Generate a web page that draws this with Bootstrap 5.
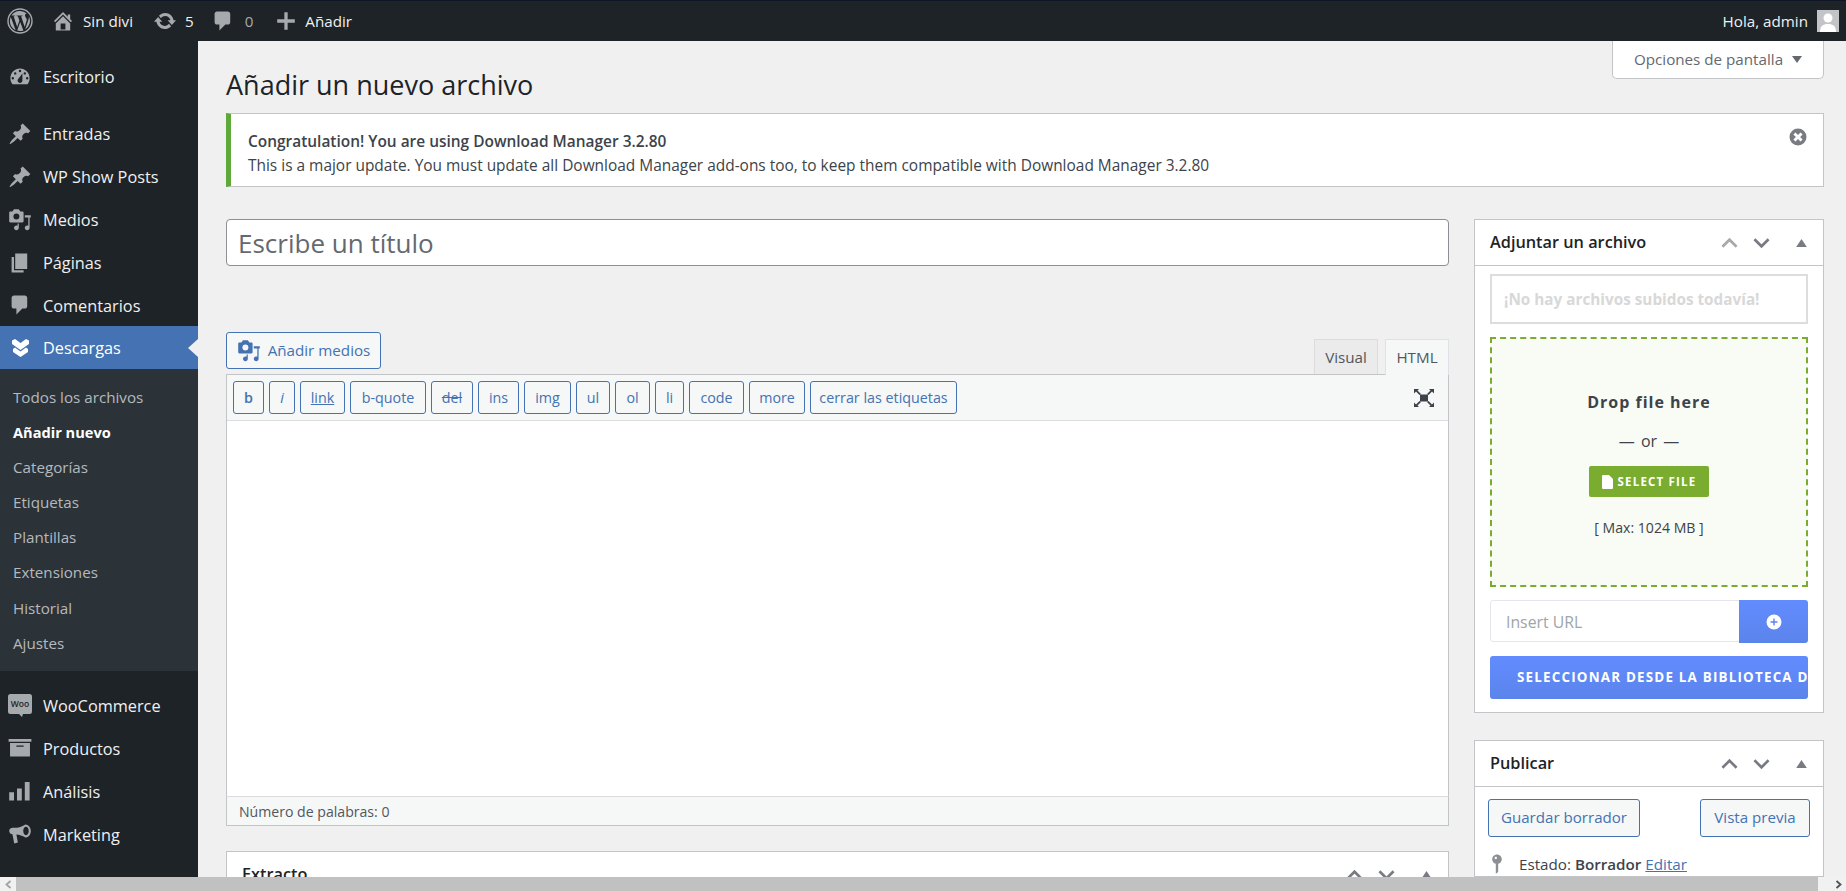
<!DOCTYPE html>
<html lang="es">
<head>
<meta charset="utf-8">
<title>Añadir un nuevo archivo</title>
<link rel="stylesheet" href="https://cdn.jsdelivr.net/npm/bootstrap@5.3.0/dist/css/bootstrap.min.css">
<style>
html,body{height:891px;overflow:hidden}
body{font-family:"Open Sans","Liberation Sans",sans-serif;font-size:14px;color:#3c434a;background:#f0f0f1;display:flex;flex-direction:column}
svg{display:block;flex:none}
.wp-topbar{height:41px;flex:none;background:#1d2327;border-top:1px solid #0e1525;color:#f0f0f1;font-size:15.2px;padding:0 7px 0 7px}
.wp-topbar svg{fill:#a7aaad}
.bar-num{color:#a7aaad}
.wp-mid{flex:1 1 auto;min-height:0;overflow:hidden}
.wp-side{width:198px;flex:none;background:#1d2327;padding-top:14px}
.wp-main{flex:1 1 auto;min-width:0;padding:0 22px 0 28px;overflow:hidden;background:#f0f0f1}
.side-link{height:43px;color:#f0f0f1;font-size:16.3px;padding-left:8px;gap:11px;text-decoration:none}
.side-link span{padding-top:2px}
.side-link svg{fill:#a7aaad;width:24px;height:24px}
.side-link.short{height:42px}
.side-gap{height:14px}
.side-gap2{height:13px}
.side-link.now{background:#4472b2;color:#fff;position:relative}
.side-link.now svg{fill:#fff}
.side-link.now::after{content:"";position:absolute;right:0;top:13px;border:9px solid transparent;border-left:0;border-right:10px solid #f0f0f1}
.side-sub{background:#2c3338;padding:11px 0 10px}
.side-sub a{display:block;height:35.1px;line-height:35px;padding-left:13px;font-size:15.2px;color:#b4b9be;text-decoration:none}
.side-sub a.on{color:#fff;font-weight:700;font-size:14.6px}
.head-row{height:72px}
.page-ttl{font-size:27px;font-weight:400;color:#1d2327;margin:23px 0 0;line-height:42px}
.scr-tab{width:212px;height:38px;background:#fff;border:1px solid #c3c4c7;border-top:0;border-radius:0 0 5px 5px;color:#646970;font-size:15.2px;gap:9px}
.scr-tab i{width:0;height:0;border:5px solid transparent;border-top:7px solid #646970;border-bottom:0}
.wp-notice{height:74px;background:#fff;border:1px solid #c3c4c7;border-left:5px solid #5fa83a;padding:15px 15px 0 17px;margin-bottom:32px;font-size:15.45px;line-height:24px;color:#3c434a}
.wp-notice b{font-weight:600}
.notice-x{fill:#787c82;width:20px;height:20px;margin-top:-2px}
.col-edit{flex:1 1 auto;min-width:0}
.col-box{width:350px;flex:none}
.ttl-input.form-control{height:47px;font-size:26px;border:1px solid #8c8f94;border-radius:4px;padding:0 11px;box-shadow:none;font-family:inherit;color:#646970;margin-bottom:66px}
.ttl-input::placeholder{color:#646970;opacity:1}
.tools-row{height:42px}
.btn.wp-btn{background:#f6f7f7;border:1px solid #4472b2;color:#4472b2;border-radius:3px;padding:0;font-size:15.2px;line-height:1;--bs-btn-hover-bg:#f6f7f7}
.media-btn.btn{width:155px;height:37px;gap:7px}
.media-btn svg{fill:#4472b2;width:24px;height:24px}
.nav-tabs.ed-tabs{border:0;gap:7px;--bs-nav-tabs-border-radius:0}
.ed-tabs .nav-link{width:64px;height:35px;padding:0;background:#ebebeb;border:1px solid #dcdcde;border-bottom:0;color:#50575e;font-size:15.2px;line-height:35px;text-align:center;border-radius:0}
.ed-tabs .nav-link.active{background:#f6f7f7;color:#50575e;height:36px;margin-bottom:-1px;position:relative}
.ed-frame{border:1px solid #c3c4c7;border-bottom:0;border-top-color:#c3c4c7}
.ed-bar{height:46px;background:#f6f7f7;border-bottom:1px solid #dcdcde;padding:0 6px;gap:5px}
.ed-bar .btn.wp-btn{height:33px;font-size:14.3px;flex:none;padding-top:2px}
.ed-bar .btn.tb-bold{font-weight:600}
.ed-area{height:375px;background:#fff}
.ed-status{height:30px;background:#f6f7f7;border:1px solid #c3c4c7;border-top:1px solid #dcdcde;font-size:14.1px;line-height:30px;padding-left:12px;color:#50575e;margin-bottom:25px}
.wp-box.card{border:1px solid #c3c4c7;border-radius:0;--bs-card-bg:#fff;margin-bottom:27px;color:#3c434a}
.wp-box .card-header{height:46px;background:#fff;border-bottom:1px solid #c3c4c7;border-radius:0;padding:0 16px 0 15px;font-size:16.3px;font-weight:600;color:#1d2327}
.hdr-ico{gap:15px}
.hdr-ico svg{fill:none;stroke:#787c82;stroke-width:2.8;width:17px;height:12px}
.hdr-ico svg.tri{fill:#787c82;stroke:none;width:11px;height:8px;margin-left:11px}
.hdr-ico svg.dim{stroke:#a7aaad}
.attach-body{padding:8px 15px 13px}
.no-files{height:50px;border:2px solid #ddd;color:#d8d8d8;font-weight:700;font-size:15.3px;padding-left:12px;margin-bottom:13px}
.drop-zone{height:250px;border:2px dashed #7aac2f;background:#f9fbf5;margin-bottom:13px;color:#3c434a}
.drop-ttl{font-size:16px;font-weight:700;letter-spacing:1px;margin-top:51px;color:#3c434a;line-height:24px}
.drop-or{font-size:16px;margin-top:15px;line-height:24px;word-spacing:2px}
.sel-file.btn{width:120px;height:31px;background:#7aac2f;border:0;border-radius:2px;color:#fff;font-size:11.5px;font-weight:700;letter-spacing:1.2px;padding:0;margin-top:13px;gap:5px}
.sel-file svg{fill:#fff;width:11px;height:14px}
.drop-max{font-size:14.1px;margin-top:20px;line-height:21px}
.url-grp{margin-bottom:13px}
.url-grp .form-control{height:42px;border:1px solid #e3e7eb;border-radius:3px 0 0 3px;font-size:15.8px;padding:1px 15px 0;font-family:inherit;box-shadow:none}
.url-grp .form-control::placeholder{color:#a0a5aa;opacity:1}
.blue-btn.btn{background:linear-gradient(#628cff,#5b84ea);border:0;color:#fff;border-radius:3px}
.url-grp .blue-btn{width:69px;height:43px;padding:0;border-radius:0 3px 3px 0}
.lib-btn.btn{width:318px;height:43px;padding:0 0 0 27px;font-size:13.4px;font-weight:700;letter-spacing:1.2px;white-space:nowrap;text-align:left;overflow:hidden}
.pub-body{padding:12px 13px 0 13px}
.pub-row{height:38px;margin-bottom:15px}
.pub-row .btn.wp-btn{height:38px;font-size:15.1px}
.state-row{gap:16px;font-size:15.2px;padding-left:3px}
.state-row svg{fill:#8c8f94;width:24px;height:24px;margin-left:-6px;margin-right:-6px}
.state-row a{color:#4472b2}
.state-row b{font-weight:600}
.fake-scroll{height:14px;flex:none;background:#f1f1f1}
.fake-arrow{width:16px;color:#a3a3a3}
.fake-thumb{flex:1 1 auto;background:#c1c1c1}
.fake-rest{width:28px}
.fake-arrow svg{fill:none;stroke:currentColor;stroke-width:1.8;width:7px;height:9px}
.fake-arrow.dark{color:#505050}
</style>
</head>
<body>
<div class="wp-topbar d-flex align-items-center">
  <svg width="26" height="26" viewBox="0 0 26 26"><circle cx="13" cy="13" r="12" fill="none" stroke="#a7aaad" stroke-width="1.4"/><path d="M2.900 13c0 4 2.300 7.400 5.700 9.100L3.800 8.900A10 10 0 0 0 2.900 13zm17-.5c0-1.300-.5-2.100-.9-2.800-.5-.8-1-1.500-1-2.300 0-.9.7-1.800 1.700-1.800h.1A10.100 10.100 0 0 0 4.500 7.500h.6c1 0 2.600-.1 2.600-.1.500 0 .6.800 0 .8 0 0-.5.100-1.100.100l3.600 10.700 2.200-6.500-1.500-4.200c-.5 0-1-.1-1-.1-.5 0-.5-.8.1-.8 0 0 1.600.1 2.600.1s2.600-.1 2.600-.1c.5 0 .6.800 0 .8 0 0-.5.100-1.100.100l3.600 10.600 1-3.300c.4-1.300.8-2.200.8-3zm-6.700 1.400-3 8.700a10.100 10.100 0 0 0 6.200-.2l-.1-.1zm8.600-5.700.1 1c0 1-.2 2.100-.8 3.500l-3 8.800a10.100 10.100 0 0 0 3.700-13.300z"/></svg>
  <div class="d-flex align-items-center" style="margin-left:18px;gap:8px"><svg width="24" height="24" viewBox="0 0 20 20"><path d="M16 8.500l1.530 1.530-1.060 1.060L10 4.620l-6.470 6.470-1.060-1.060L10 2.500l4 4v-2h2v4zm-6-2.460l6 5.990V18H4v-5.970zM12 17v-5H8v5h4z"/></svg><span>Sin divi</span></div>
  <div class="d-flex align-items-center" style="margin-left:20px;gap:8px"><svg width="24" height="24" viewBox="0 0 20 20"><path d="M10.200 3.280c3.530 0 6.430 2.610 6.920 6h2.080l-3.500 4-3.500-4h2.320c-.45-1.970-2.210-3.450-4.320-3.450-1.450 0-2.730.71-3.540 1.780L4.950 5.660C6.230 4.200 8.110 3.280 10.200 3.280zm-.4 13.440c-3.520 0-6.430-2.610-6.920-6H.8l3.500-4c1.170 1.330 2.330 2.670 3.500 4H5.480c.45 1.970 2.210 3.450 4.320 3.450 1.450 0 2.730-.71 3.540-1.780l1.710 1.950c-1.280 1.460-3.150 2.380-5.250 2.380z"/></svg><span>5</span></div>
  <div class="d-flex align-items-center" style="margin-left:17px;gap:10px"><svg width="24" height="24" viewBox="0 0 20 20"><path d="M5 2h9c1.100 0 2 .9 2 2v7c0 1.100-.9 2-2 2h-2l-5 5v-5H5c-1.100 0-2-.9-2-2V4c0-1.100.9-2 2-2z"/></svg><span class="bar-num">0</span></div>
  <div class="d-flex align-items-center" style="margin-left:22px;gap:8px"><svg width="22" height="22" viewBox="0 0 20 20"><path d="M8.500 2h3v6.500H18v3h-6.500V18h-3v-6.500H2v-3h6.500z"/></svg><span>Añadir</span></div>
  <div class="ms-auto d-flex align-items-center" style="gap:9px"><span>Hola, admin</span><svg width="22" height="22" viewBox="0 0 22 22"><rect width="22" height="22" fill="#c3c4c7"/><circle cx="11" cy="8" r="4.500" fill="#fff"/><path d="M3 22c0-6 3-8 8-8s8 2 8 8z" fill="#fff"/></svg></div>
</div>

<div class="wp-mid d-flex">
  <nav class="wp-side d-flex flex-column">
    <a class="side-link d-flex align-items-center" href="#"><svg viewBox="0 0 20 20"><path fill-rule="evenodd" d="M3.760 16h12.480c1.100-1.370 1.760-3.110 1.760-5 0-4.420-3.580-8-8-8s-8 3.580-8 8c0 1.890.66 3.630 1.760 5zM10 4a1 1 0 1 1 0 2 1 1 0 0 1 0-2zM6 6a1 1 0 1 1 0 2 1 1 0 0 1 0-2zm8 0a1 1 0 1 1 0 2 1 1 0 0 1 0-2zm-5.370 5.550L12 7v6c0 1.100-.9 2-2 2s-2-.9-2-2c0-.57.24-1.080.63-1.450zM4 10a1 1 0 1 1 0 2 1 1 0 0 1 0-2zm12 0a1 1 0 1 1 0 2 1 1 0 0 1 0-2z"/></svg><span>Escritorio</span></a>
    <div class="side-gap"></div>
    <a class="side-link d-flex align-items-center" href="#"><svg viewBox="0 0 20 20"><path d="M10.440 3.020l1.820-1.820 6.360 6.350-1.830 1.820c-1.050-.68-2.480-.57-3.410.36l-.75.75c-.92.93-1.040 2.350-.35 3.410l-1.830 1.820-2.410-2.410-2.800 2.790c-.42.42-3.380 2.710-3.800 2.290s1.860-3.390 2.280-3.810l2.790-2.790L4.100 9.360l1.830-1.820c1.050.69 2.480.57 3.400-.36l.75-.75c.93-.92 1.050-2.350.36-3.410z"/></svg><span>Entradas</span></a>
    <a class="side-link d-flex align-items-center" href="#"><svg viewBox="0 0 20 20"><path d="M10.440 3.020l1.820-1.820 6.360 6.350-1.830 1.820c-1.050-.68-2.480-.57-3.410.36l-.75.75c-.92.93-1.040 2.350-.35 3.410l-1.830 1.820-2.410-2.410-2.800 2.790c-.42.42-3.380 2.710-3.800 2.290s1.860-3.390 2.280-3.810l2.790-2.790L4.100 9.360l1.830-1.820c1.050.69 2.480.57 3.400-.36l.75-.75c.93-.92 1.050-2.350.36-3.410z"/></svg><span>WP Show Posts</span></a>
    <a class="side-link d-flex align-items-center" href="#"><svg viewBox="0 0 20 20"><path fill-rule="evenodd" d="M13 11V4c0-.55-.45-1-1-1h-1.670L9 1H5L3.670 3H2c-.55 0-1 .45-1 1v7c0 .55.45 1 1 1h10c.55 0 1-.45 1-1zM7 4.500a2.500 2.500 0 1 1 0 5 2.500 2.500 0 0 1 0-5zM14 6h5v2h-1v8.500c0 1.100-.9 2-2 2s-2-.9-2-2 .9-2 2-2c.34 0 .65.09.93.24V8H14zM9 13v3.500c0 1.100-.9 2-2 2s-2-.9-2-2 .9-2 2-2c.36 0 .7.1 1 .27V13z"/></svg><span>Medios</span></a>
    <a class="side-link d-flex align-items-center" href="#"><svg viewBox="0 0 20 20"><path d="M6 15V2h10v13H6zm-1 1h8v2H3V5h2v11z"/></svg><span>Páginas</span></a>
    <a class="side-link short d-flex align-items-center" href="#"><svg viewBox="0 0 20 20"><path d="M5 2h9c1.100 0 2 .9 2 2v7c0 1.100-.9 2-2 2h-2l-5 5v-5H5c-1.100 0-2-.9-2-2V4c0-1.100.9-2 2-2z"/></svg><span>Comentarios</span></a>
    <a class="side-link now d-flex align-items-center" href="#"><svg viewBox="0 0 24 24"><path d="M4 4.500 7 3l5.500 4L18 3l3 1.500V8l-8.500 6L4 8zM5 13l2-1.500 5.500 4 5.500-4 2 1.500v3l-7.500 5L5 16z"/></svg><span>Descargas</span></a>
    <div class="side-sub">
      <a href="#">Todos los archivos</a>
      <a class="on" href="#">Añadir nuevo</a>
      <a href="#">Categorías</a>
      <a href="#">Etiquetas</a>
      <a href="#">Plantillas</a>
      <a href="#">Extensiones</a>
      <a href="#">Historial</a>
      <a href="#">Ajustes</a>
    </div>
    <div class="side-gap2"></div>
    <a class="side-link d-flex align-items-center" href="#"><svg viewBox="0 0 24 24"><path d="M2.500 1h19A2.500 2.500 0 0 1 24 3.500v15a2.500 2.500 0 0 1-2.500 2.500H15l-1 3-3-3H2.500A2.500 2.500 0 0 1 0 18.500v-15A2.500 2.500 0 0 1 2.500 1z"/><text x="12" y="14" text-anchor="middle" font-family="Open Sans" font-size="8.500" font-weight="600" fill="#1d2327">Woo</text></svg><span>WooCommerce</span></a>
    <a class="side-link d-flex align-items-center" href="#"><svg viewBox="0 0 20 20"><path fill-rule="evenodd" d="M.5 2.500h19v2.300H.5zM1.700 5.800h16.600V17H1.700zM7 8v1h6V8z"/></svg><span>Productos</span></a>
    <a class="side-link d-flex align-items-center" href="#"><svg viewBox="0 0 20 20"><path d="M1 11h4v7H1zM7.500 8h4v10h-4zM14 2.500h4V18h-4z"/></svg><span>Análisis</span></a>
    <a class="side-link d-flex align-items-center" href="#"><svg viewBox="0 0 20 20"><path fill-rule="evenodd" d="M14.500 2c2.500 0 4.500 2.500 4.500 5.500S17 13 14.500 13c-2.600-1.500-5-2.300-7.500-2.500l1.200 6.500-3 1-1.500-7.700C2.500 10.200 1 9.200 1 7.500s1.500-2.700 3-2.700h3C9.500 4.500 12 3.500 14.500 2zm.5 2c-1.300 0-2.300 1.600-2.300 3.500S13.700 11 15 11s2.300-1.600 2.300-3.500S16.300 4 15 4z"/></svg><span>Marketing</span></a>
  </nav>

  <main class="wp-main">
    <div class="head-row d-flex justify-content-between align-items-start">
      <h1 class="page-ttl">Añadir un nuevo archivo</h1>
      <div class="scr-tab d-flex align-items-center justify-content-center">Opciones de pantalla<i></i></div>
    </div>
    <div class="wp-notice d-flex justify-content-between">
      <div><b>Congratulation! You are using Download Manager 3.2.80</b><br>This is a major update. You must update all Download Manager add-ons too, to keep them compatible with Download Manager 3.2.80</div>
      <svg class="notice-x" viewBox="0 0 20 20"><path d="M10 1.500a8.500 8.500 0 1 0 0 17 8.500 8.500 0 0 0 0-17zm4.600 11-2.100 2.100-2.500-2.500-2.500 2.500-2.100-2.100L7.900 10 5.400 7.500l2.100-2.100L10 7.900l2.500-2.500 2.100 2.100-2.500 2.500z"/></svg>
    </div>
    <div class="d-flex" style="gap:25px">
      <div class="col-edit">
        <input class="ttl-input form-control" type="text" placeholder="Escribe un título">
        <div class="tools-row d-flex justify-content-between align-items-start">
          <button class="btn wp-btn media-btn d-flex align-items-center justify-content-center" type="button"><svg viewBox="0 0 20 20"><path fill-rule="evenodd" d="M13 11V4c0-.55-.45-1-1-1h-1.670L9 1H5L3.670 3H2c-.55 0-1 .45-1 1v7c0 .55.45 1 1 1h10c.55 0 1-.45 1-1zM7 4.500a2.500 2.500 0 1 1 0 5 2.500 2.500 0 0 1 0-5zM14 6h5v2h-1v8.500c0 1.100-.9 2-2 2s-2-.9-2-2 .9-2 2-2c.34 0 .65.09.93.24V8H14zM9 13v3.500c0 1.100-.9 2-2 2s-2-.9-2-2 .9-2 2-2c.36 0 .7.1 1 .27V13z"/></svg>Añadir medios</button>
          <ul class="nav nav-tabs ed-tabs align-self-end">
            <li class="nav-item"><a class="nav-link" href="#">Visual</a></li>
            <li class="nav-item"><a class="nav-link active" href="#">HTML</a></li>
          </ul>
        </div>
        <div class="ed-frame">
          <div class="ed-bar d-flex align-items-center">
            <button class="btn wp-btn tb-bold" style="width:31px" type="button">b</button>
            <button class="btn wp-btn fst-italic" style="width:26px" type="button">i</button>
            <button class="btn wp-btn text-decoration-underline" style="width:45px" type="button">link</button>
            <button class="btn wp-btn" style="width:76px" type="button">b-quote</button>
            <button class="btn wp-btn text-decoration-line-through" style="width:42px" type="button">del</button>
            <button class="btn wp-btn" style="width:41px" type="button">ins</button>
            <button class="btn wp-btn" style="width:47px" type="button">img</button>
            <button class="btn wp-btn" style="width:34px" type="button">ul</button>
            <button class="btn wp-btn" style="width:35px" type="button">ol</button>
            <button class="btn wp-btn" style="width:29px" type="button">li</button>
            <button class="btn wp-btn" style="width:55px" type="button">code</button>
            <button class="btn wp-btn" style="width:56px" type="button">more</button>
            <button class="btn wp-btn" style="width:147px" type="button">cerrar las etiquetas</button>
            <svg class="ms-auto" width="22" height="20" viewBox="0 0 22 20" style="margin-right:7px" fill="#3c434a"><rect x="7" y="6.500" width="8" height="7"/><path d="M1 1h5L4.500 2.500 8 6 6.500 7 3 3.500 1 5.500zM21 1h-5l1.500 1.500L14 6l1.500 1L19 3.500l2 2zM1 19h5l-1.500-1.500L8 14l-1.500-1L3 16.500 1 14.500zM21 19h-5l1.500-1.500L14 14l1.500-1 3.500 3.500 2-2z"/></svg>
          </div>
          <div class="ed-area"></div>
        </div>
        <div class="ed-status">Número de palabras: 0</div>
        <div class="card wp-box">
          <div class="card-header d-flex justify-content-between align-items-center">
            <span>Extracto</span>
            <div class="hdr-ico d-flex align-items-center"><svg viewBox="0 0 18 12"><path d="M1.500 10 9 2.500 16.500 10"/></svg><svg viewBox="0 0 18 12"><path d="M1.500 2 9 9.500 16.500 2"/></svg><svg class="tri" viewBox="0 0 12 9"><path d="M6 0l6 9H0z"/></svg></div>
          </div>
        </div>
      </div>

      <div class="col-box">
        <div class="card wp-box">
          <div class="card-header d-flex justify-content-between align-items-center">
            <span>Adjuntar un archivo</span>
            <div class="hdr-ico d-flex align-items-center"><svg class="dim" viewBox="0 0 18 12"><path d="M1.500 10 9 2.500 16.500 10"/></svg><svg viewBox="0 0 18 12"><path d="M1.500 2 9 9.500 16.500 2"/></svg><svg class="tri" viewBox="0 0 12 9"><path d="M6 0l6 9H0z"/></svg></div>
          </div>
          <div class="card-body attach-body">
            <div class="no-files d-flex align-items-center">¡No hay archivos subidos todavía!</div>
            <div class="drop-zone d-flex flex-column align-items-center">
              <div class="drop-ttl">Drop file here</div>
              <div class="drop-or">— or —</div>
              <button class="btn sel-file d-flex align-items-center justify-content-center" type="button"><svg viewBox="0 0 11 14"><path d="M1 0h6l4 4v9a1 1 0 0 1-1 1H1a1 1 0 0 1-1-1V1a1 1 0 0 1 1-1z"/></svg>SELECT FILE</button>
              <div class="drop-max">[ Max: 1024 MB ]</div>
            </div>
            <div class="input-group url-grp flex-nowrap">
              <input class="form-control" type="text" placeholder="Insert URL">
              <button class="btn blue-btn d-flex align-items-center justify-content-center" type="button"><svg width="16" height="16" viewBox="0 0 16 16"><circle cx="8" cy="8" r="7.500" fill="#fff"/><path d="M7.300 4.500h1.400v2.800h2.800v1.400H8.700v2.800H7.300V8.700H4.500V7.300h2.800z" fill="#5b84ea"/></svg></button>
            </div>
            <button class="btn blue-btn lib-btn d-block" type="button">SELECCIONAR DESDE LA BIBLIOTECA DE MEDIOS</button>
          </div>
        </div>
        <div class="card wp-box">
          <div class="card-header d-flex justify-content-between align-items-center">
            <span>Publicar</span>
            <div class="hdr-ico d-flex align-items-center"><svg viewBox="0 0 18 12"><path d="M1.500 10 9 2.500 16.500 10"/></svg><svg viewBox="0 0 18 12"><path d="M1.500 2 9 9.500 16.500 2"/></svg><svg class="tri" viewBox="0 0 12 9"><path d="M6 0l6 9H0z"/></svg></div>
          </div>
          <div class="card-body pub-body">
            <div class="pub-row d-flex justify-content-between">
              <button class="btn wp-btn" style="width:152px" type="button">Guardar borrador</button>
              <button class="btn wp-btn" style="width:110px" type="button">Vista previa</button>
            </div>
            <div class="state-row d-flex align-items-center"><svg viewBox="0 0 20 20"><path fill-rule="evenodd" d="M14 6c0 1.860-1.280 3.410-3 3.860V16c0 1-2 2-2 2V9.860c-1.720-.45-3-2-3-3.860 0-2.210 1.790-4 4-4s4 1.790 4 4zM8 5c0 .55.45 1 1 1s1-.45 1-1-.45-1-1-1-1 .45-1 1z"/></svg><span>Estado: <b>Borrador</b> <a href="#">Editar</a></span></div>
          </div>
        </div>
      </div>
    </div>
  </main>
</div>

<div class="fake-scroll d-flex">
  <div class="fake-arrow d-flex align-items-center justify-content-center"><svg viewBox="0 0 7 9"><path d="M5.500 1 1.500 4.500 5.500 8"/></svg></div>
  <div class="fake-thumb"></div>
  <div class="fake-rest d-flex align-items-center justify-content-end pe-1 fake-arrow dark"><svg viewBox="0 0 7 9"><path d="M1.500 1 5.500 4.500 1.500 8"/></svg></div>
</div>
</body>
</html>
